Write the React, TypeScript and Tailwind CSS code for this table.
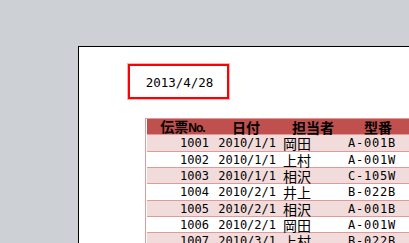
const ROWS = [
  { no: 1001, date: '2010/1/1', staff: '岡田', model: 'A-001B' },
  { no: 1002, date: '2010/1/1', staff: '上村', model: 'A-001W' },
  { no: 1003, date: '2010/1/1', staff: '相沢', model: 'C-105W' },
  { no: 1004, date: '2010/2/1', staff: '井上', model: 'B-022B' },
  { no: 1005, date: '2010/2/1', staff: '相沢', model: 'A-001B' },
  { no: 1006, date: '2010/2/1', staff: '岡田', model: 'A-001W' },
  { no: 1007, date: '2010/3/1', staff: '上村', model: 'B-022B' },
];

// alternating 17/16 row pitch, like the sheet at this zoom
const ROW_H = ['h-[17px]', 'h-[16px]', 'h-[16px]'];

const cols = 'grid grid-cols-[65px_68px_62px_72px]';
const mono = "font-['DejaVu_Sans_Mono',monospace] text-[12px]";
const jp = "font-['Noto_Sans_CJK_JP',sans-serif] text-[14px]";

const App = () => {
  return (
    <div className="w-[409px] h-[243px] overflow-hidden bg-[#cdd0d5] pl-[78px] pt-[46px]">
      {/* printed page */}
      <div className="w-[360px] h-[220px] bg-white border-l border-t border-black">
        <div className="ml-[49px] mt-[17px] w-[101px] h-[35px] border-2 border-[#ff0000] shadow-[0_0_0_1px_#ffb0b0] flex items-center justify-center pt-[3px] pl-[2px]">
          <span className="font-['DejaVu_Sans_Mono',monospace] text-[12.5px] leading-none text-black">2013/4/28</span>
        </div>

        {/* sales list */}
        <div className="ml-[66px] mt-[19px] border-t border-l border-[#e09a9a] pl-px bg-white">
          <div className={`${cols} h-[16px] bg-[#c0504d] border-b border-[#e09a9a] items-center text-black font-bold ${jp} leading-[14px]`}>
            <div className="text-center pl-[6px]">
              伝票<span className="font-['Liberation_Sans',sans-serif] text-[12px] tracking-[-1px]">No.</span>
            </div>
            <div className="text-center">日付</div>
            <div className="text-center pl-[4px]">担当者</div>
            <div className="text-center">型番</div>
          </div>
          {ROWS.map((r, i) => (
            <div
              key={r.no}
              className={`${cols} ${ROW_H[i % 3]} border-b border-[#e09a9a] items-center leading-[14px] text-black ${i % 2 === 0 ? 'bg-[#f2dcdb]' : 'bg-white'}`}
            >
              <div className={`${mono} text-right pr-[3px]`}>{r.no}</div>
              <div className={`${mono} text-right pr-[4px]`}>{r.date}</div>
              <div className={`${jp} pl-[3px]`}>{r.staff}</div>
              <div className={`${mono} pl-[6px] tracking-[0.8px]`}>{r.model}</div>
            </div>
          ))}
        </div>
      </div>
    </div>
  );
};

export default App;
